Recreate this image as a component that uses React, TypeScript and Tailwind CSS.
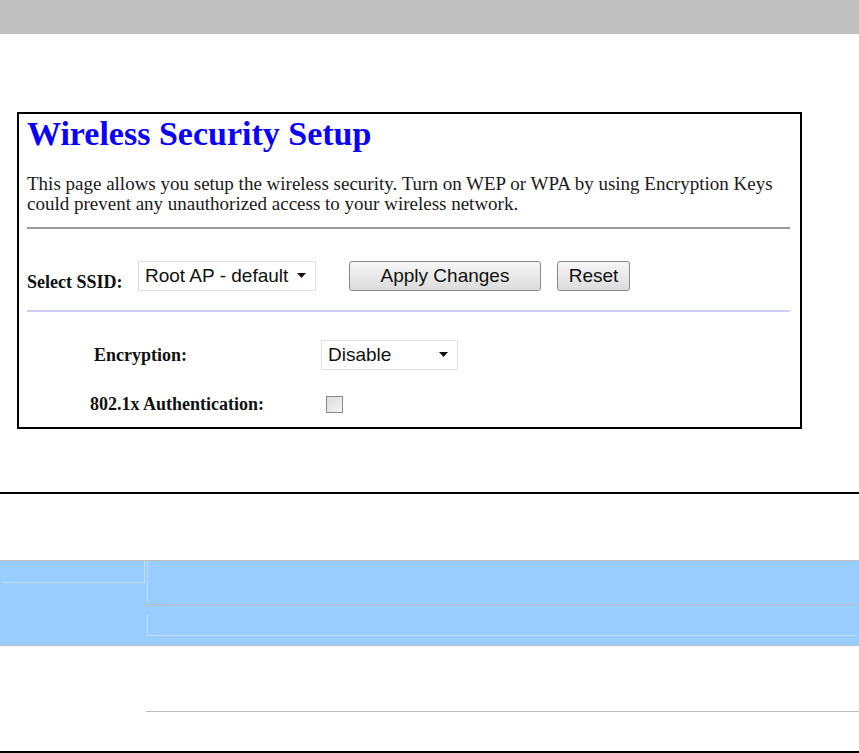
import React from "react";

const serif = { fontFamily: '"Liberation Serif", "Times New Roman", serif' };
const sans = { fontFamily: '"Liberation Sans", Arial, sans-serif' };

function Caret() {
  return (
    <svg width="9" height="5" viewBox="0 0 9 5" className="block">
      <path d="M0 0 L9 0 L4.5 5 Z" fill="#111" />
    </svg>
  );
}

function FakeSelect({ label, width }: { label: string; width: string }) {
  return (
    <div
      className={`${width} h-[30px] flex items-center justify-between border border-[#e2e2e2] bg-white pl-[6px] pr-[9px] text-[19px] text-[#111]`}
      style={sans}
    >
      <span className="leading-none">{label}</span>
      <Caret />
    </div>
  );
}

function Button({ label, width }: { label: string; width: string }) {
  return (
    <div
      className={`${width} h-[30px] flex items-center justify-center rounded-[3px] border border-[#8a8a8a] bg-gradient-to-b from-[#f6f6f6] to-[#dcdcdc] text-[19px] text-[#111]`}
      style={sans}
    >
      {label}
    </div>
  );
}

export default function App() {
  return (
    <div className="w-[859px] h-[753px] bg-white overflow-hidden flex flex-col">
      <div className="h-[34px] bg-[#c0c0c0]" />
      <div className="h-[78px]" />
      <div className="ml-[17px] w-[785px] h-[318px] border-2 border-black flex flex-col px-[8px]" style={serif}>
        <h1 className="mt-[1px] text-[34px] leading-[38px] font-bold text-[#0a00ff]">Wireless Security Setup</h1>
        <p className="mt-[21px] text-[19px] leading-[20px] text-[#1a1a1a] whitespace-nowrap">
          This page allows you setup the wireless security. Turn on WEP or WPA by using Encryption Keys
          <br />
          could prevent any unauthorized access to your wireless network.
        </p>
        <div className="mt-[13px] mr-[2px] h-[2px] bg-[#9a9a9a]" />
        <div className="mt-[32px] flex items-start h-[30px]">
          <span className="text-[18px] leading-[20px] font-bold text-[#111] w-[111px] mt-[11px]">Select SSID:</span>
          <FakeSelect label="Root AP - default" width="w-[178px]" />
          <div className="ml-[33px]">
            <Button label="Apply Changes" width="w-[192px]" />
          </div>
          <div className="ml-[16px]">
            <Button label="Reset" width="w-[73px]" />
          </div>
        </div>
        <div className="mt-[19px] mr-[2px] h-[2px] bg-[#d0cdf5]" />
        <div className="mt-[28px] flex items-center h-[30px]">
          <span className="ml-[67px] w-[227px] text-[18px] leading-[20px] font-bold text-[#111]">Encryption:</span>
          <FakeSelect label="Disable" width="w-[137px]" />
        </div>
        <div className="mt-[26px] flex items-center h-[17px]">
          <span className="ml-[63px] w-[236px] text-[18px] leading-[20px] font-bold text-[#111]">802.1x Authentication:</span>
          <div className="w-[17px] h-[17px] border border-[#8a8a8a] bg-gradient-to-br from-[#dcdcdc] to-[#f4f4f4]" />
        </div>
      </div>
      <div className="h-[63px]" />
      <div className="h-[2px] bg-black" />
      <div className="h-[66px]" />
      <div className="grid grid-cols-[146px_1fr] bg-[#99ccff] border-y border-[#bdbdbd] h-[86px]">
        <div className="flex flex-col">
          <div className="ml-[2px] h-[22px] border-r border-b border-[#c4e0ff] mr-[1px]" />
        </div>
        <div className="flex flex-col">
          <div className="h-[43px] ml-[1px] border-l border-[#c4e0ff]" />
          <div className="h-[1px] bg-[#bdbdbd]" />
          <div className="mt-[10px] ml-[1px] mr-[2px] h-[21px] border-l border-b border-[#c4e0ff]" />
        </div>
      </div>
      <div className="grid grid-cols-[146px_1fr] h-[66px]">
        <div />
        <div className="border-b border-[#bdbdbd]" />
      </div>
      <div className="h-[39px]" />
      <div className="h-[2px] bg-black" />
    </div>
  );
}
